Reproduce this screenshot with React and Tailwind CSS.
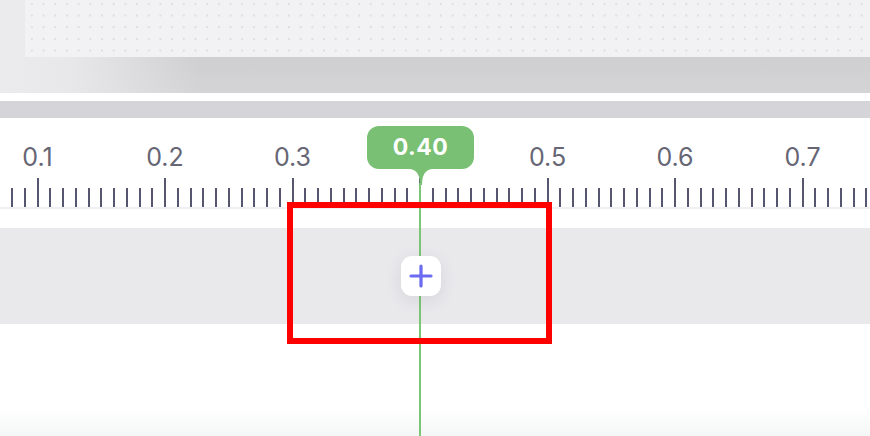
import React from "react";

const ticks = [];
for (let k = -33; k <= 35; k++) ticks.push(k);

const labels = ["0.1", "0.2", "0.3", "", "0.5", "0.6", "0.7"];

export default function App() {
  return (
    <div className="relative w-[870px] h-[436px] overflow-hidden bg-white font-['Inter',sans-serif]">
      {/* top area */}
      <div className="h-[93px] bg-[linear-gradient(to_right,#ebebed_0px,#e8e8ea_70px,rgba(235,235,237,0)_200px),linear-gradient(to_bottom,#c7c7ca,#d4d4d7)]">
        <div className="ml-[25px] h-[57px] bg-[#f2f2f4] bg-[radial-gradient(circle,#dedee2_1px,transparent_1.3px)] bg-[size:11.7px_11.7px] bg-[position:1px_-2px]" />
      </div>
      <div className="h-[8px] bg-white" />
      <div className="h-[17px] bg-[#d5d5d9]" />

      {/* ruler */}
      <div className="h-[110px] flex flex-col">
        <div className="flex ml-[-26.25px] mt-[25px] h-[28px] items-center">
          {labels.map((l, i) => (
            <div
              key={i}
              className="w-[127.5px] shrink-0 text-center text-[25px] leading-[28px] text-[#666675]"
            >
              {l}
            </div>
          ))}
        </div>
        <div className="flex items-end ml-[-7.125px] mt-[7px] h-[29px]">
          {ticks.map((k) => (
            <div key={k} className="w-[12.75px] shrink-0 flex justify-center">
              <div
                className={
                  k % 10 === 0
                    ? "w-[2px] h-[29px] bg-[#565670]"
                    : "w-[2px] h-[19px] bg-[#565670]"
                }
              />
            </div>
          ))}
        </div>
        <div className="h-[2px] bg-[#f0f0f2]" />
      </div>

      {/* track band */}
      <div className="h-[96px] bg-[#e9e9ec] flex items-center pl-[401px]">
        <div className="relative z-20 w-[40px] h-[40px] rounded-[11px] bg-white shadow-[0_4px_16px_rgba(60,60,80,0.10)] flex items-center justify-center">
          <svg width="24" height="24" viewBox="0 0 24 24">
            <path d="M12 2 V22 M2 12 H22" stroke="#6b6bf2" strokeWidth="3.2" strokeLinecap="round" />
          </svg>
        </div>
      </div>

      <div className="h-[84px] bg-white" />
      <div className="h-[28px] bg-[linear-gradient(to_bottom,#ffffff,#f5f6f6)]" />

      {/* playhead line */}
      <div className="absolute left-[419px] top-[183px] w-[2px] h-[253px] bg-[#7cc576] z-10" />

      {/* tooltip */}
      <div className="absolute left-[367px] top-[126px] z-30 flex flex-col items-center">
        <div className="w-[107px] h-[43px] rounded-[12px] bg-[#79c074] flex items-center justify-center text-white font-bold text-[23px] tracking-[0.5px]">
          0.40
        </div>
        <svg width="22" height="16" viewBox="0 0 22 16" className="-mt-[0.5px]">
          <path d="M0 0 Q10 1 10 16 L12 16 Q12 1 22 0 Z" fill="#79c074" />
        </svg>
      </div>

      {/* red annotation box */}
      <div className="absolute left-[287px] top-[202px] w-[265px] h-[142px] border-[6px] border-[#ff0000] z-40" />
    </div>
  );
}
